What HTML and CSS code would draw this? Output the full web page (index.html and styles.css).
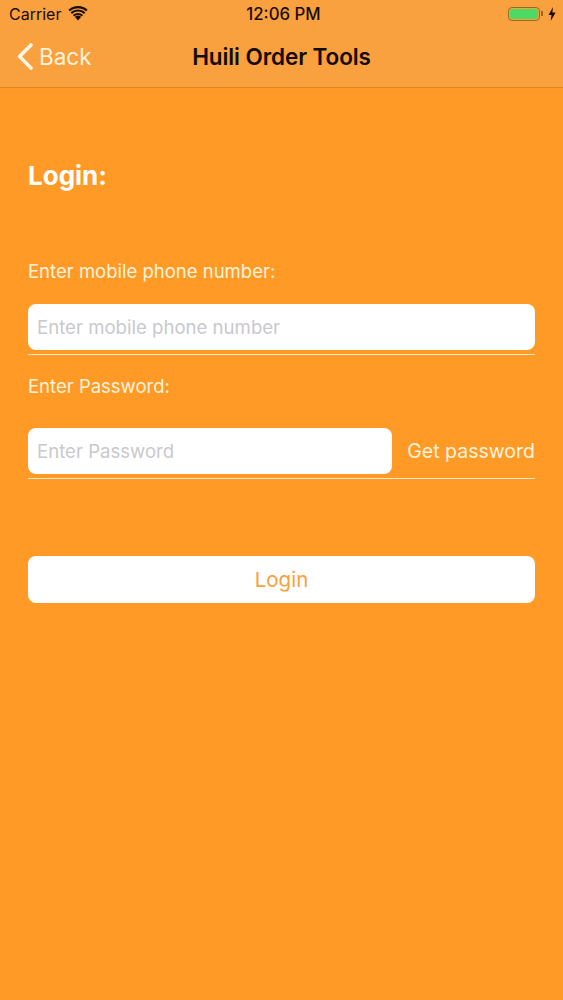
FILE: index.html
```html
<!DOCTYPE html>
<html lang="en">
<head>
<meta charset="utf-8">
<title>Huili Order Tools</title>
<link rel="stylesheet" href="styles.css">
</head>
<body>
<div class="screen">
  <header class="topbar">
    <div class="status">
      <div class="status-left">
        <span>Carrier</span>
        <svg class="wifi" width="20" height="15" viewBox="0 0 20 15"><path d="M10 14.6 6.9 11a4.6 4.6 0 0 1 6.200 0z" fill="#1a0d00"/><path d="M4.900 8.900a7.600 7.600 0 0 1 10.200 0l-1.300 1.500a5.700 5.700 0 0 0-7.600 0z" fill="#1a0d00"/><path d="M2.600 6.300a11 11 0 0 1 14.800 0l-1.400 1.600a8.900 8.900 0 0 0-12 0z" fill="#1a0d00"/><path d="M.4 3.700a14.400 14.400 0 0 1 19.200 0l-1.400 1.600a12.300 12.300 0 0 0-16.400 0z" fill="#1a0d00"/></svg>
      </div>
      <div class="status-time">12:06 PM</div>
      <div class="status-right">
        <span class="battery"><span class="battery-fill"></span></span>
        <span class="battery-tip"></span>
        <svg width="8" height="14" viewBox="0 0 8 14"><path d="M5 0 .6 8h2.900L2.700 14 7.600 5.500H4.400z" fill="#1a0d00"/></svg>
      </div>
    </div>
    <nav class="navbar">
      <a class="back">
        <svg width="18" height="29" viewBox="0 0 18 29"><path d="M15 3 3.500 14.500 15 26" fill="none" stroke="#fff6e6" stroke-width="3.600" stroke-linecap="round" stroke-linejoin="round"/></svg>
        <span>Back</span>
      </a>
      <h1 class="title">Huili Order Tools</h1>
    </nav>
  </header>
  <main class="content">
    <h2 class="heading">Login:</h2>
    <label class="label label-phone">Enter mobile phone number:</label>
    <div class="row">
      <input class="field" type="text" placeholder="Enter mobile phone number">
    </div>
    <label class="label label-pass">Enter Password:</label>
    <div class="row row-pass">
      <input class="field" type="password" placeholder="Enter Password">
      <span class="get">Get password</span>
    </div>
    <button class="login" type="button">Login</button>
  </main>
</div>
</body>
</html>
```
FILE: styles.css
```css
* { box-sizing: border-box; }
html, body { margin: 0; padding: 0; }
body { width: 563px; height: 1000px; overflow: hidden; background: #ff9a26; font-family: Inter, "Liberation Sans", sans-serif; }
.screen { width: 563px; height: 1000px; display: flex; flex-direction: column; }
.topbar { height: 88px; background: #f9a03f; border-bottom: 1px solid #dd8a2c; display: flex; flex-direction: column; }
.status { height: 29px; padding: 0 7px 2px 9px; display: flex; align-items: center; justify-content: space-between; position: relative; color: #1a0d00; font-size: 16px; }
.status-left { display: flex; align-items: center; gap: 7px; }
.wifi { margin-top: -1px; }
.status-time { position: absolute; left: 0; right: 0; padding-left: 4px; text-align: center; font-weight: 500; font-size: 16.800px; }
.status-right { display: flex; align-items: center; }
.battery { width: 32px; height: 14px; border: 1.500px solid #9a6a20; border-radius: 4px; padding: 1px; display: flex; }
.battery-fill { flex: 1; background: #4cd964; border-radius: 2px; }
.battery-tip { width: 2px; height: 5px; background: #9a6a20; margin: 0 5px 0 1px; }
.navbar { height: 58px; position: relative; display: flex; align-items: center; justify-content: center; padding-bottom: 3px; }
.back { position: absolute; left: 16px; top: 13px; display: flex; align-items: center; gap: 5px; color: #fff3dc; font-size: 22.500px; }
.title { margin: 0; font-size: 22.500px; font-weight: 600; color: #140a00; letter-spacing: -.1px; }
.content { flex: 1; padding: 0 28px; display: flex; flex-direction: column; }
.heading { margin: 73px 0 0; height: 30px; line-height: 30px; font-size: 26px; font-weight: 700; color: #fff; }
.label { color: #fff3dc; font-size: 18.500px; line-height: 22px; }
.label-phone { margin-top: 69px; }
.label-pass { margin-top: 20px; }
.label-pass + .row { margin-top: 31px; }
.row { display: flex; align-items: center; gap: 15px; border-bottom: 1.500px solid #ffe9c8; padding-bottom: 4px; margin-top: 22px; }
.field { flex: 1; min-width: 0; height: 46px; border: 0; outline: 0; border-radius: 8px; background: #fff; padding: 0 9px; font: inherit; font-size: 18.600px; }
.field::placeholder { color: #c9c9ce; opacity: 1; }
.get { color: #fff3dc; font-size: 19.500px; white-space: nowrap; }
.login { margin-top: 77px; height: 47px; border: 0; border-radius: 8px; background: #fff; color: #f9a03f; font: inherit; font-size: 20.500px; }
```
